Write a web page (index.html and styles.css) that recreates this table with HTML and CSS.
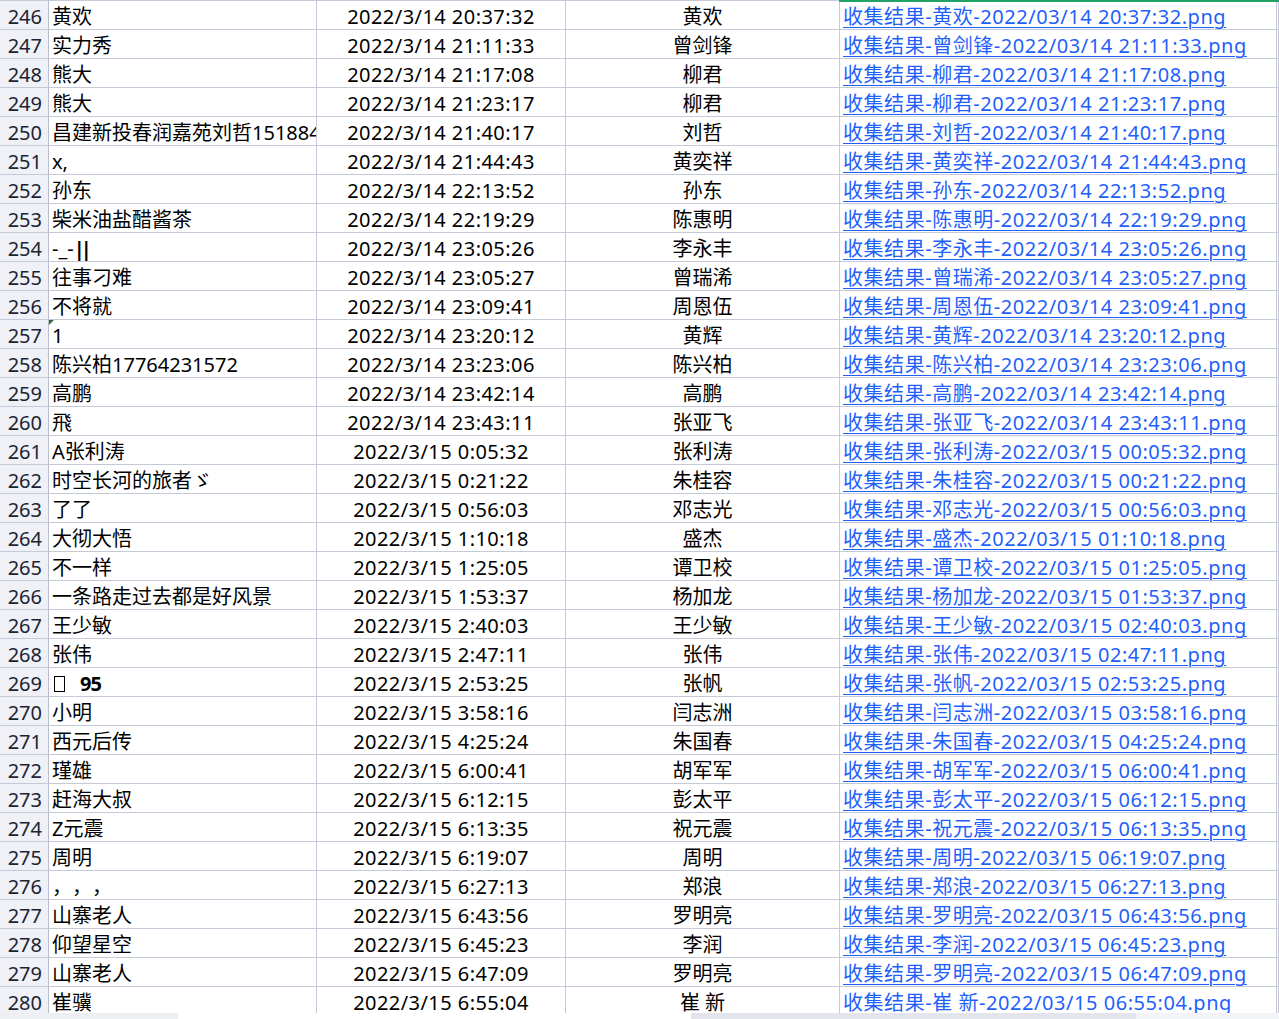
FILE: index.html
```html
<!DOCTYPE html>
<html lang="zh-CN">
<head>
<meta charset="utf-8">
<title>收集结果</title>
<link rel="stylesheet" href="styles.css">
</head>
<body>
<div class="sheet">
  <div class="col-select"></div>
  <div class="rows">
    <div class="row"><div class="rh">246</div><div class="c a">黄欢</div><div class="c b">2022/3/14 20:37:32</div><div class="c n">黄欢</div><div class="c d"><a href="#">收集结果-黄欢-2022/03/14 20:37:32.png</a></div><div class="c e"></div></div>
    <div class="row"><div class="rh">247</div><div class="c a">实力秀</div><div class="c b">2022/3/14 21:11:33</div><div class="c n">曾剑锋</div><div class="c d"><a href="#">收集结果-曾剑锋-2022/03/14 21:11:33.png</a></div><div class="c e"></div></div>
    <div class="row"><div class="rh">248</div><div class="c a">熊大</div><div class="c b">2022/3/14 21:17:08</div><div class="c n">柳君</div><div class="c d"><a href="#">收集结果-柳君-2022/03/14 21:17:08.png</a></div><div class="c e"></div></div>
    <div class="row"><div class="rh">249</div><div class="c a">熊大</div><div class="c b">2022/3/14 21:23:17</div><div class="c n">柳君</div><div class="c d"><a href="#">收集结果-柳君-2022/03/14 21:23:17.png</a></div><div class="c e"></div></div>
    <div class="row"><div class="rh">250</div><div class="c a">昌建新投春润嘉苑刘哲15188412345</div><div class="c b">2022/3/14 21:40:17</div><div class="c n">刘哲</div><div class="c d"><a href="#">收集结果-刘哲-2022/03/14 21:40:17.png</a></div><div class="c e"></div></div>
    <div class="row"><div class="rh">251</div><div class="c a">x,</div><div class="c b">2022/3/14 21:44:43</div><div class="c n">黄奕祥</div><div class="c d"><a href="#">收集结果-黄奕祥-2022/03/14 21:44:43.png</a></div><div class="c e"></div></div>
    <div class="row"><div class="rh">252</div><div class="c a">孙东</div><div class="c b">2022/3/14 22:13:52</div><div class="c n">孙东</div><div class="c d"><a href="#">收集结果-孙东-2022/03/14 22:13:52.png</a></div><div class="c e"></div></div>
    <div class="row"><div class="rh">253</div><div class="c a">柴米油盐醋酱茶</div><div class="c b">2022/3/14 22:19:29</div><div class="c n">陈惠明</div><div class="c d"><a href="#">收集结果-陈惠明-2022/03/14 22:19:29.png</a></div><div class="c e"></div></div>
    <div class="row"><div class="rh">254</div><div class="c a">-_-<span class="bars">||</span></div><div class="c b">2022/3/14 23:05:26</div><div class="c n">李永丰</div><div class="c d"><a href="#">收集结果-李永丰-2022/03/14 23:05:26.png</a></div><div class="c e"></div></div>
    <div class="row"><div class="rh">255</div><div class="c a">往事刁难</div><div class="c b">2022/3/14 23:05:27</div><div class="c n">曾瑞浠</div><div class="c d"><a href="#">收集结果-曾瑞浠-2022/03/14 23:05:27.png</a></div><div class="c e"></div></div>
    <div class="row"><div class="rh">256</div><div class="c a">不将就</div><div class="c b">2022/3/14 23:09:41</div><div class="c n">周恩伍</div><div class="c d"><a href="#">收集结果-周恩伍-2022/03/14 23:09:41.png</a></div><div class="c e"></div></div>
    <div class="row"><div class="rh">257</div><div class="c a flag">1</div><div class="c b">2022/3/14 23:20:12</div><div class="c n">黄辉</div><div class="c d"><a href="#">收集结果-黄辉-2022/03/14 23:20:12.png</a></div><div class="c e"></div></div>
    <div class="row"><div class="rh">258</div><div class="c a">陈兴柏17764231572</div><div class="c b">2022/3/14 23:23:06</div><div class="c n">陈兴柏</div><div class="c d"><a href="#">收集结果-陈兴柏-2022/03/14 23:23:06.png</a></div><div class="c e"></div></div>
    <div class="row"><div class="rh">259</div><div class="c a">高鹏</div><div class="c b">2022/3/14 23:42:14</div><div class="c n">高鹏</div><div class="c d"><a href="#">收集结果-高鹏-2022/03/14 23:42:14.png</a></div><div class="c e"></div></div>
    <div class="row"><div class="rh">260</div><div class="c a">飛</div><div class="c b">2022/3/14 23:43:11</div><div class="c n">张亚飞</div><div class="c d"><a href="#">收集结果-张亚飞-2022/03/14 23:43:11.png</a></div><div class="c e"></div></div>
    <div class="row"><div class="rh">261</div><div class="c a">A张利涛</div><div class="c b">2022/3/15 0:05:32</div><div class="c n">张利涛</div><div class="c d"><a href="#">收集结果-张利涛-2022/03/15 00:05:32.png</a></div><div class="c e"></div></div>
    <div class="row"><div class="rh">262</div><div class="c a">时空长河的旅者ゞ</div><div class="c b">2022/3/15 0:21:22</div><div class="c n">朱桂容</div><div class="c d"><a href="#">收集结果-朱桂容-2022/03/15 00:21:22.png</a></div><div class="c e"></div></div>
    <div class="row"><div class="rh">263</div><div class="c a">了了</div><div class="c b">2022/3/15 0:56:03</div><div class="c n">邓志光</div><div class="c d"><a href="#">收集结果-邓志光-2022/03/15 00:56:03.png</a></div><div class="c e"></div></div>
    <div class="row"><div class="rh">264</div><div class="c a">大彻大悟</div><div class="c b">2022/3/15 1:10:18</div><div class="c n">盛杰</div><div class="c d"><a href="#">收集结果-盛杰-2022/03/15 01:10:18.png</a></div><div class="c e"></div></div>
    <div class="row"><div class="rh">265</div><div class="c a">不一样</div><div class="c b">2022/3/15 1:25:05</div><div class="c n">谭卫校</div><div class="c d"><a href="#">收集结果-谭卫校-2022/03/15 01:25:05.png</a></div><div class="c e"></div></div>
    <div class="row"><div class="rh">266</div><div class="c a">一条路走过去都是好风景</div><div class="c b">2022/3/15 1:53:37</div><div class="c n">杨加龙</div><div class="c d"><a href="#">收集结果-杨加龙-2022/03/15 01:53:37.png</a></div><div class="c e"></div></div>
    <div class="row"><div class="rh">267</div><div class="c a">王少敏</div><div class="c b">2022/3/15 2:40:03</div><div class="c n">王少敏</div><div class="c d"><a href="#">收集结果-王少敏-2022/03/15 02:40:03.png</a></div><div class="c e"></div></div>
    <div class="row"><div class="rh">268</div><div class="c a">张伟</div><div class="c b">2022/3/15 2:47:11</div><div class="c n">张伟</div><div class="c d"><a href="#">收集结果-张伟-2022/03/15 02:47:11.png</a></div><div class="c e"></div></div>
    <div class="row"><div class="rh">269</div><div class="c a"><span class="tofu"></span><span class="odd">95</span></div><div class="c b">2022/3/15 2:53:25</div><div class="c n">张帆</div><div class="c d"><a href="#">收集结果-张帆-2022/03/15 02:53:25.png</a></div><div class="c e"></div></div>
    <div class="row"><div class="rh">270</div><div class="c a">小明</div><div class="c b">2022/3/15 3:58:16</div><div class="c n">闫志洲</div><div class="c d"><a href="#">收集结果-闫志洲-2022/03/15 03:58:16.png</a></div><div class="c e"></div></div>
    <div class="row"><div class="rh">271</div><div class="c a">西元后传</div><div class="c b">2022/3/15 4:25:24</div><div class="c n">朱国春</div><div class="c d"><a href="#">收集结果-朱国春-2022/03/15 04:25:24.png</a></div><div class="c e"></div></div>
    <div class="row"><div class="rh">272</div><div class="c a">瑾雄</div><div class="c b">2022/3/15 6:00:41</div><div class="c n">胡军军</div><div class="c d"><a href="#">收集结果-胡军军-2022/03/15 06:00:41.png</a></div><div class="c e"></div></div>
    <div class="row"><div class="rh">273</div><div class="c a">赶海大叔</div><div class="c b">2022/3/15 6:12:15</div><div class="c n">彭太平</div><div class="c d"><a href="#">收集结果-彭太平-2022/03/15 06:12:15.png</a></div><div class="c e"></div></div>
    <div class="row"><div class="rh">274</div><div class="c a">Z元震</div><div class="c b">2022/3/15 6:13:35</div><div class="c n">祝元震</div><div class="c d"><a href="#">收集结果-祝元震-2022/03/15 06:13:35.png</a></div><div class="c e"></div></div>
    <div class="row"><div class="rh">275</div><div class="c a">周明</div><div class="c b">2022/3/15 6:19:07</div><div class="c n">周明</div><div class="c d"><a href="#">收集结果-周明-2022/03/15 06:19:07.png</a></div><div class="c e"></div></div>
    <div class="row"><div class="rh">276</div><div class="c a"><span class="fw">，</span><span class="fw">，</span><span class="fw">，</span></div><div class="c b">2022/3/15 6:27:13</div><div class="c n">郑浪</div><div class="c d"><a href="#">收集结果-郑浪-2022/03/15 06:27:13.png</a></div><div class="c e"></div></div>
    <div class="row"><div class="rh">277</div><div class="c a">山寨老人</div><div class="c b">2022/3/15 6:43:56</div><div class="c n">罗明亮</div><div class="c d"><a href="#">收集结果-罗明亮-2022/03/15 06:43:56.png</a></div><div class="c e"></div></div>
    <div class="row"><div class="rh">278</div><div class="c a">仰望星空</div><div class="c b">2022/3/15 6:45:23</div><div class="c n">李润</div><div class="c d"><a href="#">收集结果-李润-2022/03/15 06:45:23.png</a></div><div class="c e"></div></div>
    <div class="row"><div class="rh">279</div><div class="c a">山寨老人</div><div class="c b">2022/3/15 6:47:09</div><div class="c n">罗明亮</div><div class="c d"><a href="#">收集结果-罗明亮-2022/03/15 06:47:09.png</a></div><div class="c e"></div></div>
    <div class="row"><div class="rh">280</div><div class="c a">崔骥</div><div class="c b">2022/3/15 6:55:04</div><div class="c n">崔 新</div><div class="c d"><a href="#">收集结果-崔 新-2022/03/15 06:55:04.png</a></div><div class="c e"></div></div>
  </div>
  <div class="hscroll">
    <div class="hs-corner"></div>
    <div class="hs-track"><div class="hs-gap"></div><div class="hs-thumb"></div></div>
  </div>
</div>
</body>
</html>
```

FILE: styles.css
```css
html, body {
  margin: 0;
  padding: 0;
  background: #ffffff;
}
body {
  width: 1279px;
  height: 1019px;
  overflow: hidden;
  font-family: "Noto Sans", "Noto Sans CJK SC", sans-serif;
  font-size: 20px;
  color: #000000;
}
.sheet {
  position: relative;
  width: 1279px;
  height: 1019px;
  display: flex;
  flex-direction: column;
}
.col-select {
  position: absolute;
  left: 839px;
  top: 0;
  width: 440px;
  height: 2px;
  background: #21a366;
  z-index: 2;
}
.rows {
  height: 1013px;
  overflow: hidden;
  border-top: 1px solid #c6cad8;
  box-sizing: border-box;
}
.row {
  display: grid;
  grid-template-columns: 49px 268px 249px 274px 437px 1fr;
  height: 29px;
}
.rh, .c {
  box-sizing: border-box;
  height: 29px;
  border-right: 1px solid #c6cad8;
  border-bottom: 1px solid #c6cad8;
  line-height: 31px;
  white-space: nowrap;
  overflow: hidden;
}
.rh {
  background: #eff1f6;
  border-right-color: #b8bece;
  border-bottom-color: #c6cad8;
  text-align: right;
  padding-right: 6px;
  color: #1c2433;
}
.c.a {
  padding-left: 3px;
  position: relative;
}
.c.b {
  text-align: center;
  letter-spacing: 0.45px;
}
.c.n {
  text-align: center;
}
.c.d {
  padding-left: 3px;
  letter-spacing: 0.55px;
}
.c.d a {
  color: #1f5ffa;
  text-decoration: underline;
  text-decoration-thickness: 1px;
  text-underline-offset: 3px;
}
.flag::before {
  content: "";
  position: absolute;
  left: 0;
  top: 0;
  width: 0;
  height: 0;
  border-top: 5px solid #2f6b3c;
  border-right: 5px solid transparent;
}
.bars {
  letter-spacing: -4px;
  font-weight: 700;
}
.fw {
  display: inline-block;
  width: 20px;
}
.tofu {
  display: inline-block;
  width: 9px;
  height: 14px;
  border: 1px solid #000;
  vertical-align: -1px;
  margin-left: 2px;
  margin-right: 15px;
}
.odd {
  font-weight: 700;
  letter-spacing: -1px;
}
.hscroll {
  height: 6px;
  display: flex;
}
.hs-corner {
  width: 178px;
  background: #eeeff3;
}
.hs-track {
  flex: 1;
  display: flex;
  background: #f3f4f7;
}
.hs-gap {
  width: 513px;
  background: #ffffff;
}
.hs-thumb {
  width: 445px;
  background: #e4e5ec;
}
```
